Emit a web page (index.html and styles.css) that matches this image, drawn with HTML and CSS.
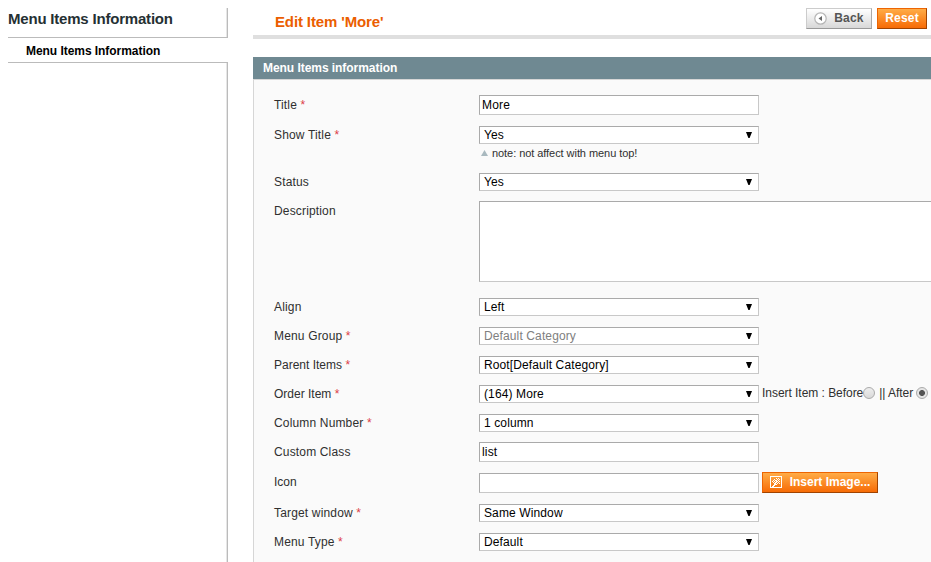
FILE: index.html
```html
<!DOCTYPE html>
<html lang="en">
<head>
<meta charset="utf-8">
<title>Edit Item</title>
<link rel="stylesheet" href="styles.css">
</head>
<body>
<svg width="0" height="0" class="defs"><symbol id="arrow" viewBox="0 0 6 6"><path d="M0 0h6L3.6 6H2.4z"/></symbol></svg>
<div class="page">
  <aside class="sidebar">
    <h3 class="side-title"><span>Menu Items Information</span></h3>
    <a class="side-tab"><span>Menu Items Information</span></a>
    <div class="side-rest"></div>
  </aside>
  <main class="main">
    <header class="header">
      <h1><span>Edit Item 'More'</span></h1>
      <div class="actions">
        <button class="btn back"><svg width="13" height="13" viewBox="0 0 13 13"><circle cx="6.5" cy="6.5" r="5.7" fill="#fff" stroke="#b5b5b5" stroke-width="1.2"/><path d="M8 4v5L4.5 6.5z" fill="#666"/></svg><span>Back</span></button>
        <button class="btn orange reset"><span>Reset</span></button>
      </div>
    </header>
    <h2 class="section"><span>Menu Items information</span></h2>
    <form class="form">
      <div class="row text-row"><label>Title <i>*</i></label><div class="input">More</div></div>
      <div class="row noted"><label>Show Title <i>*</i></label><div><div class="select">Yes<svg class="arr"><use href="#arrow"/></svg></div><p class="note"><svg width="7" height="6" viewBox="0 0 7 6"><path d="M3.5 0L7 6H0z" fill="#a9b9bf"/></svg><span>note: not affect with menu top!</span></p></div></div>
      <div class="row tight"><label>Status</label><div class="select">Yes<svg class="arr"><use href="#arrow"/></svg></div></div>
      <div class="row area-row"><label>Description</label><div class="area"></div></div>
      <div class="row"><label>Align</label><div class="select">Left<svg class="arr"><use href="#arrow"/></svg></div></div>
      <div class="row"><label>Menu Group <i>*</i></label><div class="select disabled">Default Category<svg class="arr"><use href="#arrow"/></svg></div></div>
      <div class="row"><label class="narrow">Parent Items <i>*</i></label><div class="select">Root[Default Category]<svg class="arr"><use href="#arrow"/></svg></div></div>
      <div class="row"><label class="narrow">Order Item <i>*</i></label><div class="select">(164) More<svg class="arr"><use href="#arrow"/></svg></div>
        <div class="insert"><span class="before">Insert Item : Before</span><b class="radio"></b><span class="after">|| After</span><b class="radio on"></b></div></div>
      <div class="row tight"><label>Column Number <i>*</i></label><div class="select">1 column<svg class="arr"><use href="#arrow"/></svg></div></div>
      <div class="row text-row tight"><label>Custom Class</label><div class="input">list</div></div>
      <div class="row icon-row tight"><label class="narrow">Icon</label><div class="input"></div>
        <button type="button" class="btn orange image"><svg width="12" height="12" viewBox="0 0 12 12" fill="#fff"><path d="M0 0h12v12H0zM1 1v10h10V1z" fill-rule="evenodd"/><path d="M6 2h1v1H6zM8 2h1v1H8zM4 3h1v1H4zM7 3h1v1H7zM9 3h1v1H9zM3 4h1v1H3zM5 4h2v1H5zM8 4h1v1H8zM2 5h1v1H2zM4 5h1v1H4zM6 5h2v1H6zM9 5h1v1H9zM3 6h1v1H3zM5 6h2v1H5zM8 6h1v1H8zM4 7h2v1H4zM7 7h1v1H7zM9 7h1v1H9zM4 8h3v1H4zM3 9h2v1H3zM2 10h2v1H2z"/></svg><span>Insert Image...</span></button></div>
      <div class="row"><label>Target window <i>*</i></label><div class="select">Same Window<svg class="arr"><use href="#arrow"/></svg></div></div>
      <div class="row"><label>Menu Type <i>*</i></label><div class="select">Default<svg class="arr"><use href="#arrow"/></svg></div></div>
    </form>
  </main>
</div>
</body>
</html>
```
FILE: styles.css
```css
* { box-sizing: border-box; }
body { margin: 0; background: #fff; font: 12px "Liberation Sans", Arial, sans-serif; color: #2f2f2f; overflow: hidden; }
h1, h2, h3, p { margin: 0; }
.defs { display: block; height: 0; }
.page { display: flex; height: 562px; padding: 8px 0 0 8px; gap: 25px; white-space: nowrap; }
.sidebar { width: 220px; flex: none; display: flex; flex-direction: column; }
.side-title { height: 30px; border-bottom: 1px solid #bbb; font-size: 15px; line-height: 22px; color: #253033; letter-spacing: -.2px; }
.side-title, .side-rest { box-shadow: inset -1px 0 #bbb, inset -2px 0 #e6e6e6; }
.side-tab { height: 24px; padding-left: 18px; font-weight: bold; line-height: 26px; color: #000; letter-spacing: -.05px; }
.side-rest { flex: 1; border-top: 1px solid #bbb; }
.main { flex: 1; min-width: 0; display: flex; flex-direction: column; }
.header { display: flex; justify-content: space-between; height: 31px; border-bottom: 4px solid #dfdfdf; padding: 0 4px 0 22px; }
.header h1 { font-size: 15px; line-height: 27px; color: #eb5e00; letter-spacing: -.13px; }
.actions { display: flex; gap: 5px; }
.btn { display: flex; align-items: center; justify-content: center; height: 21px; padding: 0; border: 1px solid; font: bold 12px "Liberation Sans", Arial, sans-serif; }
.back { width: 66px; gap: 7px; color: #555; border-color: #ccc #aaa #999 #ccc; background: linear-gradient(#fff, #d8d8d8); letter-spacing: .2px; }
.orange { color: #fff; border-color: #ed6502 #a04300 #a04300 #ed6502; background: linear-gradient(#ffac47, #f76b05); }
.reset { width: 50px; letter-spacing: .2px; }
.btn span { position: relative; top: -1px; }
.section { height: 22px; margin-top: 18px; padding-left: 10px; background: #6f8992; color: #fff; font-size: 12px; line-height: 22px; letter-spacing: -.05px; }
.form { flex: 1; min-height: 0; overflow: hidden; border: 1px solid #d6d6d6; border-width: 1px 0 0 1px; background: #fafafa; padding: 15px 0 0 20px; }
.row { display: flex; align-items: flex-start; margin-bottom: 11px; line-height: 18px; letter-spacing: .16px; }
.row label { width: 205px; flex: none; }
.row label.narrow { letter-spacing: 0; }
.row label i { color: #dc4046; font-style: normal; }
.text-row { line-height: 20px; }
.tight { margin-bottom: 10px; }
.area-row { margin-bottom: 16px; line-height: 20px; }
.input, .select, .area { width: 280px; flex: none; border: 1px solid; border-color: #aaa #c8c8c8 #c8c8c8 #aaa; background: #fff; color: #000; }
.input { height: 20px; padding-left: 2px; line-height: 18px; }
.select { display: flex; justify-content: space-between; align-items: center; height: 18px; padding: 0 6px 0 4px; line-height: 16px; letter-spacing: .12px; }
.disabled { color: #808080; }
.arr { width: 6px; height: 6px; fill: #000; }
.area { width: 460px; height: 81px; }
.noted { margin-bottom: 10px; }
.note { display: flex; align-items: center; gap: 4px; height: 19px; padding: 0 0 2px 2px; font-size: 11px; letter-spacing: -.06px; }
.insert { display: flex; align-items: center; height: 16px; margin-left: 3px; letter-spacing: -.04px; }
.after { margin: 0 3px 0 4px; }
.radio { width: 12px; height: 12px; border: 1px solid #aaa; border-radius: 50%; background: linear-gradient(#eee, #d9d9d9); }
.radio.on { background: radial-gradient(circle, #555 0 2.6px, #e5e5e5 3.3px); }
.icon-row { height: 22px; line-height: 20px; }
.icon-row .input { margin-top: 1px; }
.image { width: 116px; height: 21px; margin-left: 3px; gap: 8px; }
.image svg { position: relative; top: -.5px; }
```
